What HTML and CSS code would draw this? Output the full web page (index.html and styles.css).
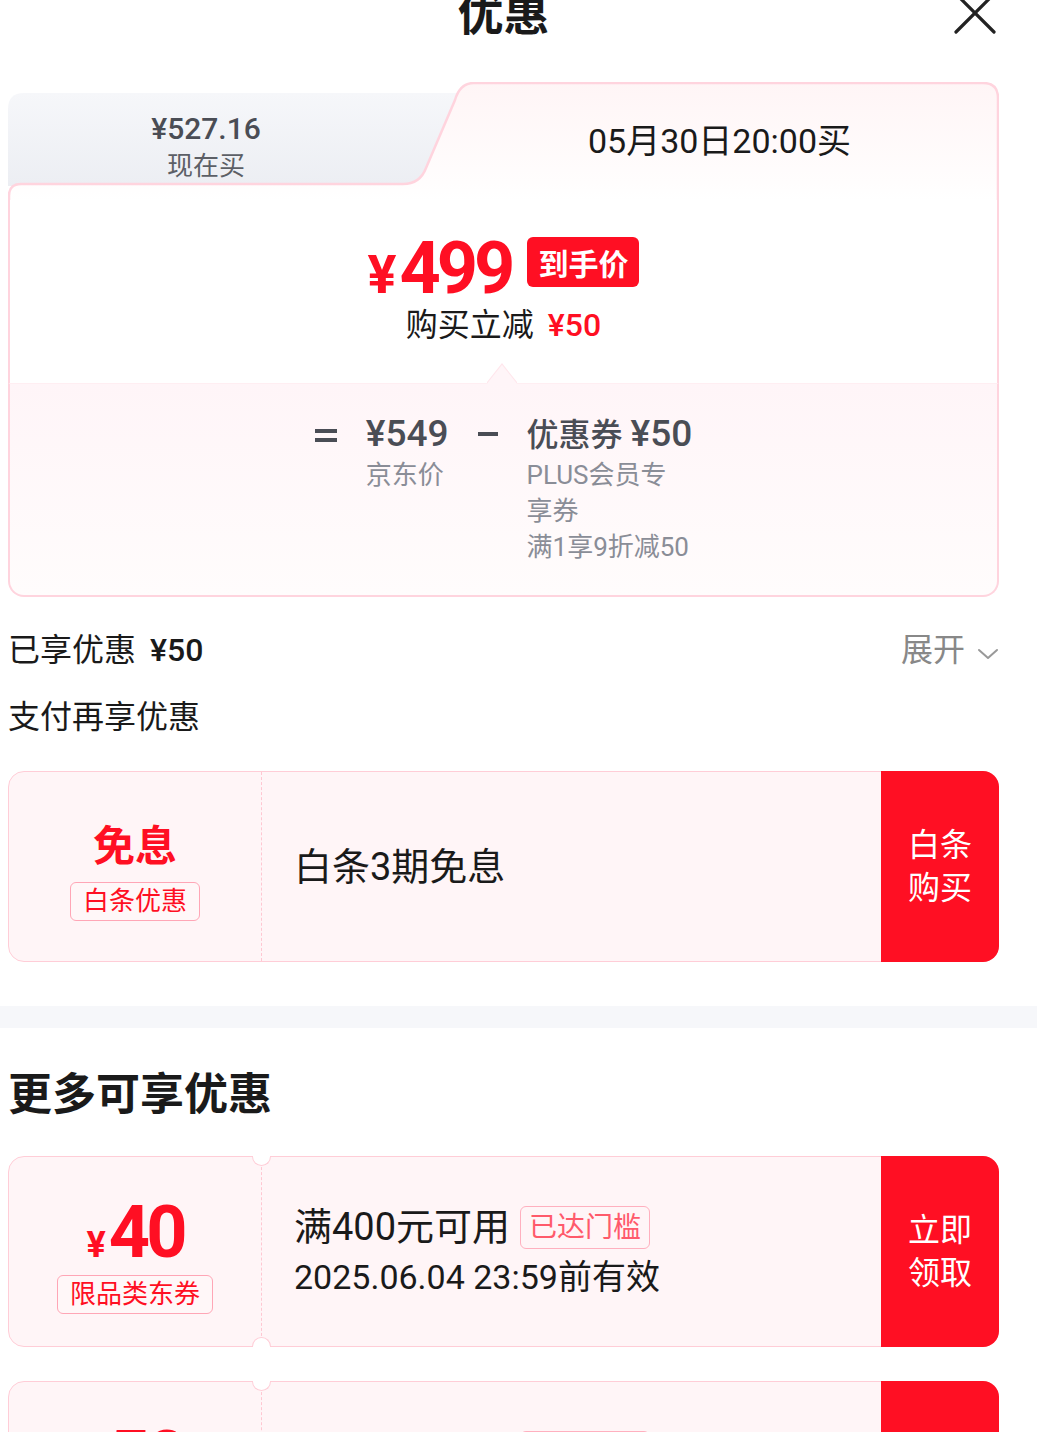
FILE: index.html
```html
<!DOCTYPE html>
<html lang="zh-CN">
<head>
    <meta charset="UTF-8">
    <meta name="viewport" content="width=device-width, initial-scale=1.0">
    <title>优惠</title>
    <link rel="stylesheet" href="styles.css">
</head>
<body>
    <div class="sheet">
        <div class="sheet-head">
            <span></span>
            <h1 class="sheet-title">优惠</h1>
            <button class="close-btn" aria-label="关闭">
                <svg width="44" height="44" viewBox="0 0 44 44">
                    <path d="M3 3 L41 41 M41 3 L3 41" stroke="#222" stroke-width="3.2" stroke-linecap="round" fill="none"/>
                </svg>
            </button>
        </div>

        <div class="price-card">
            <div class="tabs">
                <svg class="tabs-bg" width="991" height="118" viewBox="0 0 991 118">
                    <defs>
                        <linearGradient id="gNow" x1="0" y1="0" x2="0" y2="1">
                            <stop offset="0" stop-color="#f6f7fa"/>
                            <stop offset="1" stop-color="#eceef3"/>
                        </linearGradient>
                        <linearGradient id="gLater" x1="0" y1="0" x2="0" y2="1">
                            <stop offset="0" stop-color="#fff5f6"/>
                            <stop offset="0.85" stop-color="#fffdfd"/>
                            <stop offset="1" stop-color="#ffffff"/>
                        </linearGradient>
                    </defs>
                    <path d="M0,104 L0,27 Q0,11 16,11 L470,11 L470,104 Z" fill="url(#gNow)"/>
                    <path d="M1,118 L1,114 Q1,102 13,102 L395,102 Q412,102 418,86 L447,18 Q452,1 466,1 L975,1 Q990,1 990,16 L990,118 Z" fill="url(#gLater)"/>
                    <path d="M1,118 L1,114 Q1,102 13,102 L395,102 Q412,102 418,86 L447,18 Q452,1 466,1 L975,1 Q990,1 990,16 L990,118" fill="none" stroke="#ffd4de" stroke-width="2.5"/>
                </svg>
                <div class="tab tab-now">
                    <div class="tab-price">¥527.16</div>
                    <div class="tab-label">现在买</div>
                </div>
                <div class="tab tab-later">05月30日20:00买</div>
            </div>

            <div class="card-body">
                <div class="final">
                    <div class="final-price"><span class="yen">¥</span>499</div>
                    <span class="final-badge">到手价</span>
                </div>
                <div class="final-sub">购买立减<em>¥50</em></div>
            </div>

            <div class="calc">
                <svg class="calc-arrow" width="30" height="21" viewBox="0 0 30 21">
                    <path d="M0,21 L15,1 L30,21 Z" fill="#fff5f8"/>
                    <path d="M0,20 L15,1 L30,20" fill="none" stroke="#ffe6ec" stroke-width="1.2"/>
                </svg>
                <div class="calc-row">
                    <span class="op op-equal"></span>
                    <div class="term">
                        <div class="term-main"><span class="num">¥549</span></div>
                        <div class="term-desc">京东价</div>
                    </div>
                    <span class="op op-minus"></span>
                    <div class="term term-coupon">
                        <div class="term-main">优惠券 <span class="num">¥50</span></div>
                        <div class="term-desc">PLUS会员专享券</div>
                        <div class="term-desc">满1享9折减50</div>
                    </div>
                </div>
            </div>
        </div>

        <div class="summary">
            <span>已享优惠 <b>¥50</b></span>
            <span class="expand">展开
                <svg width="22" height="14" viewBox="0 0 22 14">
                    <path d="M2 3 L11 11 L20 3" fill="none" stroke="#999" stroke-width="2" stroke-linecap="round" stroke-linejoin="round"/>
                </svg>
            </span>
        </div>
        <div class="section-label">支付再享优惠</div>

        <div class="ticket ticket-pay">
            <div class="ticket-left">
                <div class="perk-title">免息</div>
                <span class="ticket-tag">白条优惠</span>
            </div>
            <div class="ticket-main">
                <div class="ticket-text">白条3期免息</div>
            </div>
            <button class="ticket-btn">白条<br>购买</button>
        </div>
    </div>

    <div class="band"></div>

    <div class="sheet">
        <h2 class="more-title">更多可享优惠</h2>

        <div class="ticket notched">
            <div class="ticket-left">
                <div class="ticket-amount"><span class="yen">¥</span>40</div>
                <span class="ticket-tag">限品类东券</span>
            </div>
            <div class="ticket-main">
                <div class="ticket-text">满400元可用<span class="reach-tag">已达门槛</span></div>
                <div class="ticket-date">2025.06.04 23:59前有效</div>
            </div>
            <button class="ticket-btn">立即<br>领取</button>
        </div>

        <div class="ticket notched">
            <div class="ticket-left">
                <div class="ticket-amount"><span class="yen">¥</span>50</div>
                <span class="ticket-tag">限品类东券</span>
            </div>
            <div class="ticket-main">
                <div class="ticket-text">满500元可用<span class="reach-tag">已达门槛</span></div>
                <div class="ticket-date">2025.06.04 23:59前有效</div>
            </div>
            <button class="ticket-btn">立即<br>领取</button>
        </div>
    </div>
</body>
</html>
```

FILE: styles.css
```css
body {
    margin: 0;
    font-family: Roboto, "Noto Sans CJK SC", sans-serif;
    color: #1a1a1a;
    background: #fff;
}

.sheet {
    padding: 0 38px 0 8px;
}

.sheet-head {
    display: grid;
    grid-template-columns: 1fr auto 1fr;
    align-items: start;
    height: 82px;
}

.sheet-title {
    margin: -14px 0 0;
    font-size: 46px;
    line-height: 56px;
    font-weight: 700;
}

.close-btn {
    justify-self: end;
    margin: -9px 2px 0 0;
    width: 44px;
    height: 44px;
    padding: 0;
    border: none;
    background: none;
}

/* price card */
.tabs {
    position: relative;
    display: flex;
    height: 118px;
}

.tabs-bg {
    position: absolute;
    left: 0;
    top: 0;
}

.tab {
    position: relative;
    text-align: center;
}

.tab-now {
    width: 396px;
    padding-top: 30px;
    color: #4a4d55;
}

.tab-price {
    font-size: 30px;
    line-height: 34px;
    font-weight: 500;
}

.tab-label {
    font-size: 26px;
    line-height: 40px;
    color: #5c5f66;
}

.tab-later {
    flex: 1;
    margin-left: 36px;
    padding-top: 39px;
    font-size: 34px;
    line-height: 40px;
}

.card-body {
    border-left: 2px solid #ffd4de;
    border-right: 2px solid #ffd4de;
    background: #fff;
    padding: 35px 0 36px;
    text-align: center;
}

.final {
    display: flex;
    justify-content: center;
    align-items: flex-start;
    gap: 16px;
    height: 68px;
}

.final-price {
    color: #ff0f23;
    font-weight: 700;
    font-size: 72px;
    line-height: 68px;
    letter-spacing: -4px;
}

.final-price .yen {
    font-size: 54px;
    letter-spacing: 0;
    margin-right: 3px;
}

.final-badge {
    margin-top: 2px;
    background: #ff0f23;
    color: #fff;
    font-family: "Noto Sans CJK SC", sans-serif;
    font-size: 30px;
    font-weight: 700;
    line-height: 50px;
    padding: 0 11px;
    border-radius: 6px;
}

.final-sub {
    margin-top: 0;
    font-size: 32px;
    line-height: 44px;
}

.final-sub em {
    font-style: normal;
    color: #ff0f23;
    font-weight: 500;
    margin-left: 14px;
}

.calc {
    position: relative;
    border: 2px solid #ffd4de;
    border-top: 1px solid #ffeef2;
    border-radius: 0 0 16px 16px;
    background: linear-gradient(#fff5f8, #fffcfc);
    padding: 28px 0 30px;
}

.calc-arrow {
    position: absolute;
    top: -21px;
    left: 50%;
    margin-left: -17px;
}

.calc-row {
    display: flex;
    justify-content: center;
    align-items: flex-start;
    gap: 29px;
}

.op {
    display: block;
    width: 22px;
    margin-top: 17px;
}

.op-equal {
    height: 5px;
    border-top: 4px solid #4a4d55;
    border-bottom: 4px solid #4a4d55;
}

.op-minus {
    width: 20px;
    height: 4px;
    margin-top: 20px;
    background: #4a4d55;
}

.term-main {
    font-size: 32px;
    line-height: 44px;
    font-weight: 500;
    color: #4a4d55;
    white-space: nowrap;
}

.term-main .num {
    font-size: 37px;
}

.term-desc {
    font-size: 26px;
    line-height: 36px;
    color: #8a8d97;
}

.term-coupon .term-desc {
    width: 164px;
}

/* summary rows */
.summary {
    display: flex;
    justify-content: space-between;
    align-items: center;
    margin-top: 31px;
    font-size: 32px;
    line-height: 44px;
}

.summary b {
    font-weight: 500;
    margin-left: 6px;
}

.expand {
    display: flex;
    align-items: center;
    gap: 12px;
    color: #888;
}

.expand svg {
    margin-top: 8px;
}

.section-label {
    margin-top: 23px;
    font-size: 32px;
    line-height: 44px;
}

/* tickets */
.ticket {
    position: relative;
    display: flex;
    height: 191px;
    box-sizing: border-box;
    border: 1px solid #ffcdd7;
    border-radius: 16px;
    background: #fff5f7;
}

.ticket-pay {
    margin-top: 32px;
}

.ticket-left {
    position: relative;
    width: 253px;
    border-right: 1px dashed #ffc7d2;
    display: flex;
    flex-direction: column;
    align-items: center;
    justify-content: center;
    gap: 10px;
    padding-top: 10px;
    box-sizing: border-box;
}

.notched + .notched {
    margin-top: 34px;
}

.more-title + .notched {
    margin-top: 33px;
}

.notched .ticket-left {
    gap: 0;
    padding-top: 14px;
}

.notched .ticket-left::before,
.notched .ticket-left::after {
    content: "";
    position: absolute;
    right: -10px;
    width: 17px;
    height: 9px;
    background: #fff;
    border: 1px solid #ffcdd7;
}

.notched .ticket-left::before {
    top: -1px;
    border-top: 0;
    border-radius: 0 0 10px 10px;
}

.notched .ticket-left::after {
    bottom: -1px;
    border-bottom: 0;
    border-radius: 10px 10px 0 0;
}

.perk-title {
    color: #ff0f23;
    font-size: 42px;
    line-height: 50px;
    font-weight: 700;
}

.ticket-tag {
    font-size: 26px;
    line-height: 37px;
    padding: 0 12px;
    border: 1px solid #ffa6b6;
    border-radius: 6px;
    color: #ff0f23;
    background: #fff7f8;
}

.ticket-amount {
    color: #ff0f23;
    font-weight: 700;
    font-size: 72px;
    line-height: 60px;
    letter-spacing: -4px;
}

.ticket-amount .yen {
    font-size: 36px;
    letter-spacing: 0;
    margin-right: 3px;
}

.ticket-main {
    flex: 1;
    padding-left: 32px;
    display: flex;
    flex-direction: column;
    justify-content: center;
    gap: 2px;
}

.ticket-text {
    font-size: 38px;
    line-height: 48px;
}

.reach-tag {
    display: inline-block;
    vertical-align: middle;
    margin: -4px 0 0 10px;
    font-size: 28px;
    line-height: 41px;
    padding: 0 8px;
    border: 1px solid #ffb0bf;
    border-radius: 6px;
    color: #ff5a6b;
}

.ticket-date {
    font-size: 34px;
    line-height: 48px;
}

.ticket-btn {
    width: 118px;
    margin: -1px -1px -1px 0;
    padding: 0;
    border: 0;
    border-radius: 0 16px 16px 0;
    background: #ff0f23;
    color: #fff;
    font-family: inherit;
    font-size: 32px;
    line-height: 43px;
}

.band {
    height: 22px;
    margin-top: 44px;
    background: #f6f7fa;
}

.more-title {
    margin: 39px 0 0;
    font-size: 44px;
    line-height: 56px;
    font-weight: 700;
}
```
